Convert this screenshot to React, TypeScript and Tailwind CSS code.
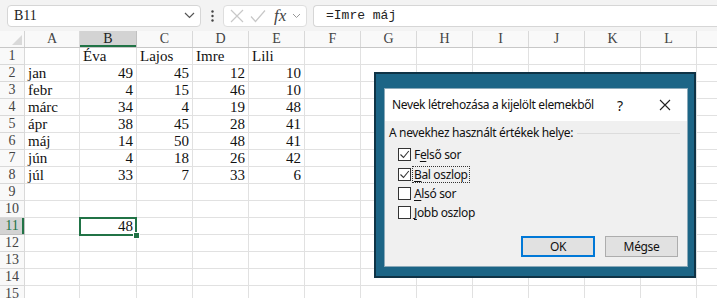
const cols = ["A", "B", "C", "D", "E", "F", "G", "H", "I", "J", "K", "L"];

const colWidth: Record<string, string> = {
  A: "w-[55px]",
  B: "w-[57px]",
};

type Val = string | number | null;

const data: Val[][] = [
  [null, "Éva", "Lajos", "Imre", "Lili"],
  ["jan", 49, 45, 12, 10],
  ["febr", 4, 15, 46, 10],
  ["márc", 34, 4, 19, 48],
  ["ápr", 38, 45, 28, 41],
  ["máj", 14, 50, 48, 41],
  ["jún", 4, 18, 26, 42],
  ["júl", 33, 7, 33, 6],
  [],
  [],
  [null, 48],
  [],
  [],
  [],
  [],
];

function FormulaBar() {
  return (
    <div className="flex h-[31px] items-center bg-[#f3f3f3] pl-[7px]">
      <div className="flex h-[22px] w-[194px] items-center justify-between rounded-[4px] border border-[#d6d6d6] bg-white pl-[6px] pr-[5px] font-['Liberation_Serif',serif] text-[14px] text-[#222]">
        <span>B11</span>
        <svg width="11" height="7" viewBox="0 0 11 7">
          <path d="M1 1l4.5 4.5L10 1" fill="none" stroke="#555" strokeWidth="1.2" />
        </svg>
      </div>
      <div className="flex w-[22px] justify-center">
        <svg width="3" height="12" viewBox="0 0 3 12">
          <circle cx="1.5" cy="1.5" r="1.2" fill="#444" />
          <circle cx="1.5" cy="6" r="1.2" fill="#444" />
          <circle cx="1.5" cy="10.5" r="1.2" fill="#444" />
        </svg>
      </div>
      <div className="flex h-[22px] w-[84px] items-center gap-[6px] rounded-[4px] border border-[#dedede] bg-white pl-[6px]">
        <svg width="14" height="14" viewBox="0 0 14 14">
          <path d="M1 1l12 12M13 1L1 13" stroke="#c8c8c8" strokeWidth="1.2" />
        </svg>
        <svg width="16" height="14" viewBox="0 0 16 14">
          <path d="M1 7.5l4.5 5L15 1.5" fill="none" stroke="#c8c8c8" strokeWidth="1.2" />
        </svg>
        <span className="ml-[2px] font-['Liberation_Serif',serif] text-[17px] italic leading-none text-[#444]">fx</span>
        <svg width="9" height="6" viewBox="0 0 9 6">
          <path d="M1 1l3.5 3.5L8 1" fill="none" stroke="#999" strokeWidth="1" />
        </svg>
      </div>
      <div className="ml-[6px] flex h-[22px] flex-1 items-center rounded-l-[4px] border border-r-0 border-[#d6d6d6] bg-white pl-[12px] font-['Liberation_Mono',monospace] text-[13px] text-[#222]">
        =Imre máj
      </div>
    </div>
  );
}

function HeaderRow() {
  return (
    <div className="flex h-[17px] border-b border-[#c8c8c8] bg-[#f9f9f9] font-['Liberation_Serif',serif] text-[14px] leading-[16px] text-[#444]">
      <div className="relative w-[25px] shrink-0 border-r border-[#d4d4d4]">
        <svg className="absolute bottom-[2px] right-[2px]" width="10" height="10" viewBox="0 0 10 10">
          <path d="M10 0v10H0z" fill="#d9d9d9" />
        </svg>
      </div>
      {cols.map((c) => (
        <div
          key={c}
          className={`${colWidth[c] ?? "w-[56px]"} shrink-0 border-r text-center ${
            c === "B"
              ? "border-[#c0c0c0] bg-[#d3d3d3] text-[#222] shadow-[inset_0_-2px_0_#217346]"
              : "border-[#d9d9d9]"
          }`}
        >
          {c}
        </div>
      ))}
      <div className="flex-1" />
    </div>
  );
}

function Row({ idx, vals }: { idx: number; vals: Val[] }) {
  const active = idx === 11;
  return (
    <div className="flex h-[17px] font-['Liberation_Serif',serif] text-[15px] leading-[16px] text-[#111]">
      <div
        className={`w-[25px] shrink-0 border-b border-r text-center text-[14px] ${
          active
            ? "border-[#c0c0c0] bg-[#d3d3d3] text-[#217346] shadow-[inset_-2px_0_0_#217346]"
            : "border-[#d9d9d9] bg-[#f9f9f9] text-[#444]"
        }`}
      >
        {idx}
      </div>
      {cols.map((c, i) => {
        const v = vals[i];
        const selected = active && c === "B";
        return (
          <div
            key={c}
            className={`${colWidth[c] ?? "w-[56px]"} shrink-0 border-b border-r border-[#e1e1e1] px-[3px] ${
              typeof v === "number" ? "text-right" : "text-left"
            } ${selected ? "relative z-10" : ""}`}
          >
            {v ?? ""}
            {selected && (
              <div className="absolute -left-[1px] -top-[1px] h-[19px] w-[58px] border-2 border-[#217346]">
                <div className="absolute -bottom-[5px] -right-[5px] h-[7px] w-[7px] border border-white bg-[#217346]" />
              </div>
            )}
          </div>
        );
      })}
      <div className="flex-1 border-b border-[#e1e1e1]" />
    </div>
  );
}

function Check({ checked }: { checked: boolean }) {
  return (
    <div className="flex h-[13px] w-[13px] shrink-0 items-center justify-center border border-[#333] bg-white">
      {checked && (
        <svg width="11" height="11" viewBox="0 0 11 11">
          <path d="M1.5 5.5l3 3L9.8 2" fill="none" stroke="#333" strokeWidth="1.1" />
        </svg>
      )}
    </div>
  );
}

function Option({
  checked,
  pre,
  acc,
  post,
  focus,
}: {
  checked: boolean;
  pre: string;
  acc: string;
  post: string;
  focus?: boolean;
}) {
  return (
    <div className="flex h-[19.4px] items-center gap-[2px]">
      <Check checked={checked} />
      <span
        className={`px-[1px] leading-[15px] ${focus ? "outline outline-1 outline-dotted outline-[#333]" : ""}`}
      >
        {pre}
        <span className="underline underline-offset-2">{acc}</span>
        {post}
      </span>
    </div>
  );
}

function Dialog() {
  return (
    <div className="absolute left-[374px] top-[72px] h-[206px] w-[322px] border-2 border-[#0f3346] bg-[#1c6586] pb-[9px] pl-[8px] pr-[6px] pt-[14px]">
      <div className="flex h-full flex-col border border-[#8aa9b9] bg-[#f0f0f0] font-['Noto_Sans',sans-serif] text-[12px] tracking-[-0.35px] text-[#111]">
        <div className="flex h-[32px] items-center bg-white pl-[7px] text-[12px]">
          <span className="flex-1 whitespace-nowrap">Nevek létrehozása a kijelölt elemekből</span>
          <span className="w-[20px] text-[14px]">?</span>
          <svg className="ml-[22px] mr-[16px]" width="12" height="12" viewBox="0 0 12 12">
            <path d="M1 1l10 10M11 1L1 11" stroke="#222" strokeWidth="1.1" />
          </svg>
        </div>
        <div className="flex flex-1 flex-col px-[4px] pt-[2px]">
          <div className="flex h-[20px] items-center gap-[4px]">
            <span className="whitespace-nowrap">A nevekhez használt értékek helye:</span>
            <div className="mr-[3px] h-px flex-1 bg-[#dcdcdc]" />
          </div>
          <div className="flex flex-col pl-[9px] pt-[2px]">
            <Option checked pre="F" acc="e" post="lső sor" />
            <Option checked pre="" acc="B" post="al oszlop" focus />
            <Option checked={false} pre="" acc="A" post="lsó sor" />
            <Option checked={false} pre="" acc="J" post="obb oszlop" />
          </div>
          <div className="mt-auto flex justify-end gap-[10px] pb-[9px] pr-[5px]">
            <div className="flex h-[21px] w-[74px] items-center justify-center border-2 border-[#0078d7] bg-[#e1e1e1]">
              OK
            </div>
            <div className="flex h-[21px] w-[73px] items-center justify-center border border-[#adadad] bg-[#e1e1e1]">
              Mégse
            </div>
          </div>
        </div>
      </div>
    </div>
  );
}

export default function App() {
  return (
    <div className="relative h-[298px] w-[717px] overflow-hidden bg-white">
      <FormulaBar />
      <HeaderRow />
      {data.map((vals, i) => (
        <Row key={i} idx={i + 1} vals={vals} />
      ))}
      <Dialog />
    </div>
  );
}
